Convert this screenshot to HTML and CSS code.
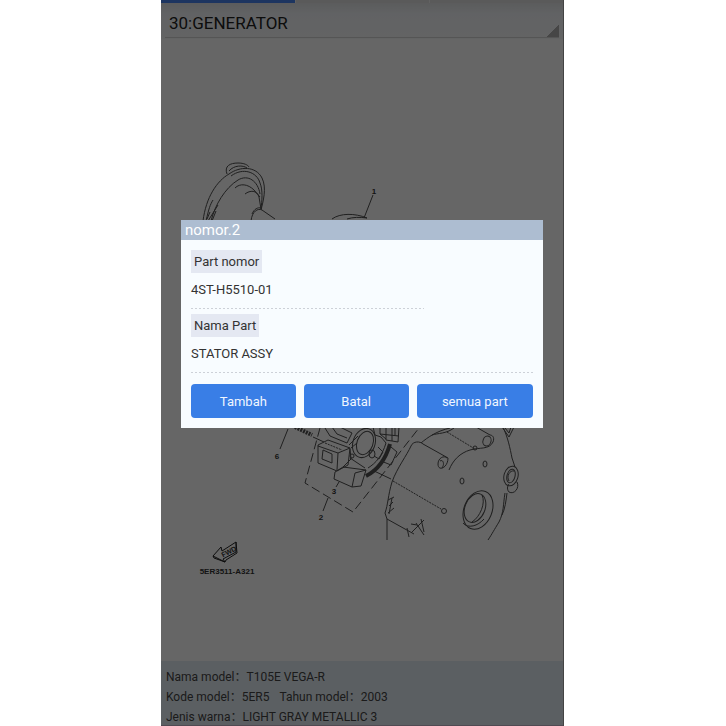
FILE: index.html
```html
<!DOCTYPE html>
<html lang="id">
<head>
    <meta charset="UTF-8">
    <meta name="viewport" content="width=device-width, initial-scale=1.0">
    <title>30:GENERATOR</title>
    <link rel="stylesheet" href="styles.css">
</head>
<body>
    <div class="phone">
        <div class="tabs">
            <span class="tab active"></span>
            <span class="tab"></span>
            <span class="tab"></span>
        </div>

        <header class="spinner">
            <select class="spinner-select" aria-label="Kelompok part">
                <option>30:GENERATOR</option>
            </select>
        </header>

        <main class="diagram">
            <svg class="drawing" viewBox="161 39 402 622" role="img" aria-label="Diagram generator">
                <!-- rotor -->
                <g>
                    <path d="M203 221C206 197 217 181 229 174C240 166 256 166 262 178C267 188 263 202 261 210"/>
                    <path d="M231 176C243 167 257 172 260 183C263 190 262 201 261 209"/>
                    <path d="M206 221C209 208 210 205 213 200M211 221C215 205 225 188 238 180C248 174 258 181 260 194"/>
                    <path d="M227 174C224 166 230 163 238 163C244 163 248 165 249 167M229 171C234 165 243 165 247 168"/>
                    <path d="M235 188C240 183 248 184 254 190L260 197"/>
                    <path d="M245 194C250 190 257 190 259 197L261 209"/>
                    <path d="M251 221C252 211 258 208 262 210L275 219M252 214C254 209 258 207 261 208"/>
                    <path d="M208 221L218 205M212 221L216 211M207 219L210 212"/>
                </g>
                <!-- stator -->
                <g>
                    <path d="M373 195L364 218M332 219C340 213 355 213 367 218M347 219C353 217 360 217 367 218"/>
                    <path d="M288 429L280 449"/>
                    <path class="thick" d="M295 427L312 435"/>
                    <path d="M313 437L324 442"/>
                    <path class="dashed" d="M320 428L305 483L353 512L419 428"/>
                    <path d="M318 445L328 440L350 448L348 465L337 471L318 463ZM318 446L338 453L337 470M338 453L350 448"/>
                    <path d="M323 450L332 454L332 463L322 459Z"/>
                    <path class="dotted" d="M325 443L342 450"/>
                    <path d="M350 458L365 468M335 472L334 479L352 487L361 486L366 470L343 467L335 472M355 473L352 487M355 473L366 470M350 449L351 459L343 467"/>
                    <ellipse cx="364" cy="443" rx="11" ry="15" transform="rotate(20 364 443)"/>
                    <ellipse cx="365" cy="443" rx="8" ry="12" transform="rotate(20 365 443)"/>
                    <ellipse cx="372" cy="454" rx="3" ry="4"/>
                    <ellipse cx="352" cy="456" rx="2" ry="2"/>
                    <path d="M325 428L330 436L347 443L352 433L340 427M332 427L337 434L347 438M349 445L358 436M351 448L357 443M373 427L375 435L381 437L386 443"/>
                    <path d="M380 427V434L386 439M386 427V440L398 442L399 427M392 427V441M380 434L399 436M395 427V435"/>
                    <path class="bold" d="M390 444C386 458 378 470 366 476"/>
                    <path d="M386 443C382 456 376 463 368 468M391 447L397 452L391 465L381 461M378 447L383 452L379 459L374 456"/>
                    <path d="M372 470L391 479M339 482L336 487M328 498L323 511"/>
                    <path class="dotted" d="M393 481L441 509"/>
                </g>
                <!-- crankcase cover -->
                <g>
                    <path d="M387 540V519L385 513C388 505 388 495 392 482C397 468 407 455 411 446C413 441 420 441 423 444L448 458"/>
                    <path d="M448 458C448 468 438 472 438 464C438 458 444 455 447 458M440 461C443 459 445 464 442 468"/>
                    <path d="M449 470C453 460 460 453 470 450C480 447 489 450 493 442C495 437 492 435 490 435L476 427"/>
                    <ellipse cx="487" cy="441" rx="4" ry="5" transform="rotate(20 487 441)"/>
                    <path d="M421 443C428 437 437 431 450 428M432 435C438 433 446 434 454 428"/>
                    <path class="dotted" d="M447 432L475 449"/>
                    <circle cx="475" cy="448" r="2"/>
                    <ellipse cx="485" cy="464" rx="2" ry="3"/>
                    <ellipse cx="462" cy="481" rx="2" ry="3"/>
                    <circle cx="444" cy="511" r="2.5"/>
                    <path d="M503 427C508 438 510 448 512 458L515 467M502 427L509 437L514 427M505 428L509 433L511 427"/>
                    <ellipse cx="511" cy="476" rx="7" ry="10" transform="rotate(15 511 476)"/>
                    <ellipse cx="511" cy="476" rx="4" ry="7" transform="rotate(15 511 476)"/>
                    <path d="M509 481C506 476 510 470 514 471M517 482C520 488 514 495 509 492C507 490 507 486 509 484"/>
                    <path d="M505 493C503 505 504 512 499 522C494 530 492 534 488 540M507 493C506 501 505 509 502 515"/>
                    <ellipse cx="478" cy="510" rx="14" ry="20" transform="rotate(22 478 510)"/>
                    <ellipse cx="475" cy="508" rx="10" ry="15" transform="rotate(22 475 508)"/>
                    <path d="M482 495C486 503 480 517 472 522M463 523C468 529 478 526 484 519"/>
                    <path d="M388 500L394 497M389 506L393 502M388 513L394 508M392 498L389 514M387 519L414 534"/>
                    <path d="M407 528L409 537M411 533L424 520M416 523L424 535M421 519L424 532M411 524L417 525"/>
                </g>
                <!-- front direction mark -->
                <path class="mark" d="M213 556L221 547L222 551L236 542V552L223 559L225 562ZM213 556L214 558L225 562L226 560L237 553L236 542"/>
                <text class="fwd" x="229" y="554" transform="rotate(-28 229 552)">FWD</text>

                <text class="ref" x="374" y="194">1</text>
                <text class="ref" x="321" y="520">2</text>
                <text class="ref" x="334" y="494">3</text>
                <text class="ref" x="277" y="459">6</text>
                <text class="ref" x="227" y="574">5ER3511-A321</text>
            </svg>
        </main>

        <footer class="model-info">
            <div>Nama model&#65306;<span>T105E VEGA-R</span></div>
            <div>Kode model&#65306;<span class="code">5ER5</span>Tahun model&#65306;<span>2003</span></div>
            <div>Jenis warna&#65306;<span>LIGHT GRAY METALLIC 3</span></div>
        </footer>

        <div class="overlay">
            <section class="dialog" role="dialog" aria-labelledby="dialog-title">
                <h1 class="dialog-title" id="dialog-title">nomor.2</h1>
                <div class="dialog-body">
                    <dl class="fields">
                        <div class="field short">
                            <dt>Part nomor</dt>
                            <dd>4ST-H5510-01</dd>
                        </div>
                        <div class="field">
                            <dt>Nama Part</dt>
                            <dd>STATOR ASSY</dd>
                        </div>
                    </dl>
                    <div class="actions">
                        <button type="button" class="btn">Tambah</button>
                        <button type="button" class="btn">Batal</button>
                        <button type="button" class="btn">semua part</button>
                    </div>
                </div>
            </section>
        </div>
    </div>
</body>
</html>
```
FILE: styles.css
```css
* {
    box-sizing: border-box;
}
body {
    margin: 0;
    padding-right: 1px;
    background: #fff;
    font-family: Roboto, "Noto Sans CJK SC", sans-serif;
    font-size: 13px;
    color: #333;
}
.phone {
    position: relative;
    display: flex;
    flex-direction: column;
    max-width: 403px;
    min-height: 100vh;
    margin: 0 auto;
    background: #fff;
    border-right: 1px solid #444;
}
.tabs {
    display: grid;
    grid-template-columns: repeat(3, 1fr);
    height: 3px;
    background: #e0e0e0;
}
.tab + .tab {
    border-left: 1px solid #f5f5f5;
}
.tab.active {
    background: #4a86f0;
}
.spinner {
    padding: 0 4px 1px;
    background: linear-gradient(#e4e6e8, #f3f6fa 30%, #f8f9fa);
}
.spinner-select {
    display: block;
    width: 100%;
    height: 35px;
    padding: 5px 4px 0;
    appearance: none;
    border: none;
    border-bottom: 1px solid #d4d4d4;
    border-radius: 0;
    background: linear-gradient(135deg, transparent 50%, #b0b0b0 50%) right bottom / 12px 12px no-repeat;
    font-family: inherit;
    font-size: 17px;
    color: #222;
}
.diagram {
    flex: 1;
}
.drawing {
    display: block;
    width: 100%;
    fill: none;
    stroke: #505050;
    stroke-width: 1;
    stroke-linejoin: round;
}
.drawing .thick {
    stroke-width: 4;
    stroke-dasharray: 2 1;
}
.drawing .bold {
    stroke-width: 4;
}
.drawing .dashed {
    stroke-dasharray: 9 4;
}
.drawing .dotted {
    stroke-dasharray: 2 1;
}
.drawing .mark {
    stroke: #222;
}
.drawing text {
    fill: #333;
    stroke: none;
    font-family: "Liberation Sans", sans-serif;
    font-weight: bold;
    text-anchor: middle;
}
.ref {
    font-size: 8px;
}
.fwd {
    font-size: 7px;
}
.model-info {
    padding: 6px 5px 0;
    background: #e4eef5;
    border-bottom: 1px solid #c8b8cc;
    font-size: 12px;
    line-height: 20px;
    height: 65px;
    overflow: hidden;
    color: #444;
}
.model-info .code {
    margin-right: 10px;
}
.overlay {
    position: absolute;
    inset: 0;
    display: flex;
    align-items: center;
    padding: 0 20px 78px;
    background: rgba(0, 0, 0, 0.6);
}
.dialog {
    flex: 1;
    background: #f8fcff;
}
.dialog-title {
    margin: 0;
    padding: 1px 4px 0;
    background: #adbdd1;
    color: #fff;
    font-size: 15px;
    font-weight: normal;
    line-height: 19px;
}
.dialog-body {
    padding: 10px;
}
.fields {
    margin: 0;
}
.field {
    margin-bottom: 5px;
    padding-bottom: 1px;
    background: repeating-linear-gradient(90deg, #cdd1d8 0 2px, transparent 2px 4px) left bottom / 100% 1px no-repeat;
}
.field.short {
    width: 68%;
}
.field dt {
    width: fit-content;
    padding: 0 3px;
    background: #e4e8f2;
    line-height: 23px;
}
.field dd {
    margin: 0;
    padding: 7px 0 8px;
    line-height: 20px;
}
.actions {
    display: grid;
    grid-template-columns: 9fr 9fr 10fr;
    gap: 8px;
    margin-top: 11px;
}
.btn {
    height: 34px;
    padding: 0;
    border: none;
    border-radius: 4px;
    background: #397ee6;
    color: #f0f6ff;
    font-family: inherit;
    font-size: 13px;
    cursor: pointer;
}
.btn:hover {
    background: #2f6fd0;
}
```
